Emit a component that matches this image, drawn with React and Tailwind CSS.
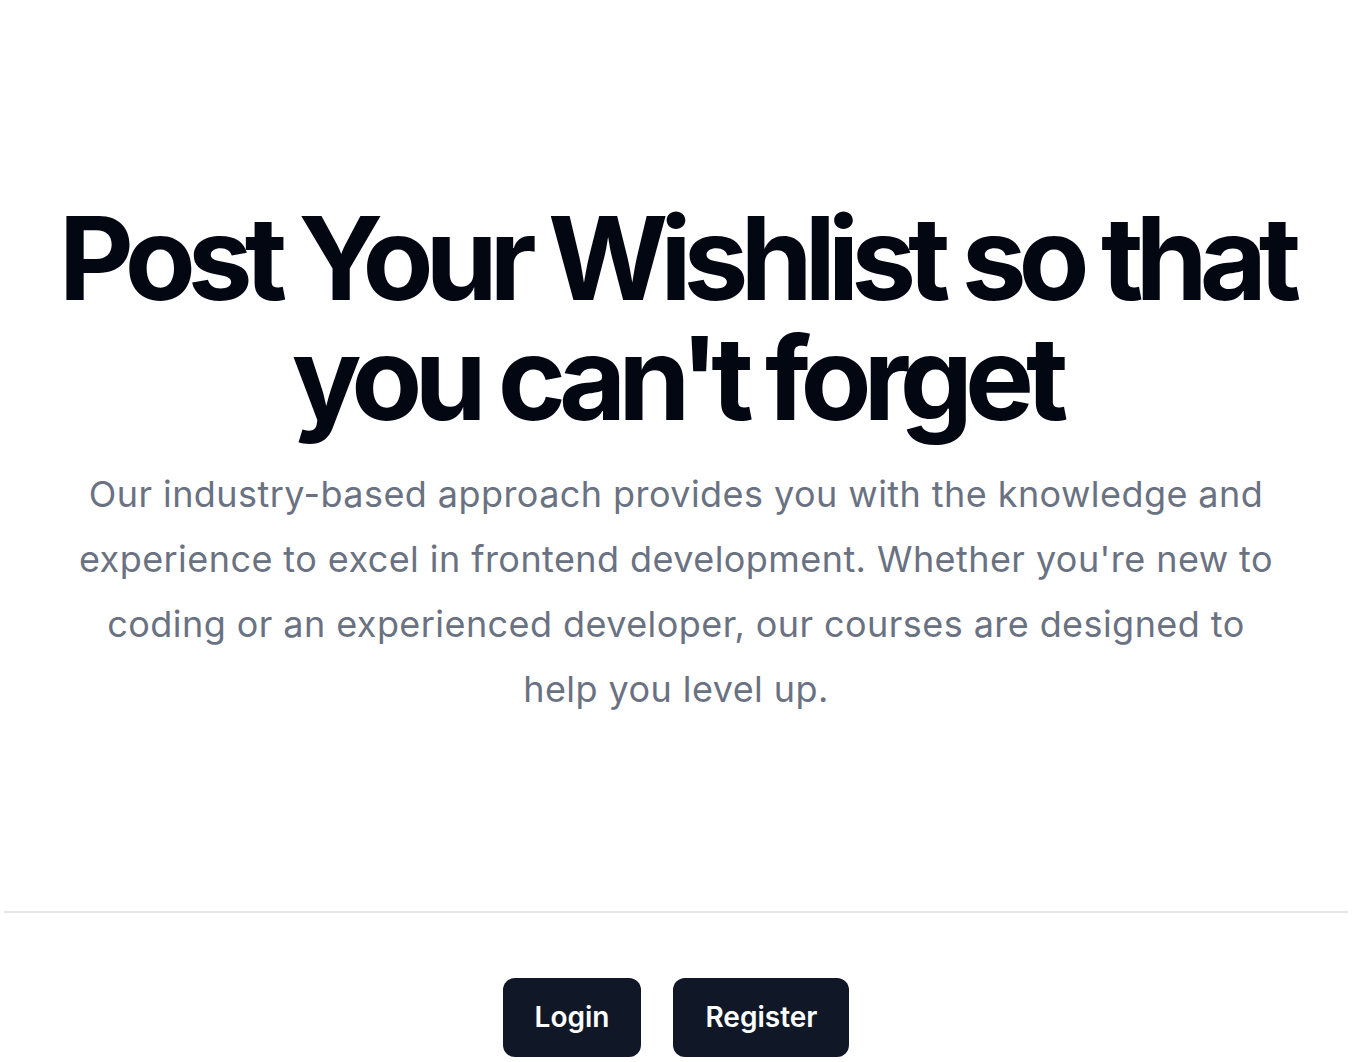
export default function App() {
  return (
    <div
      className="min-h-screen bg-white"
      style={{ fontFamily: "Inter, 'Noto Sans', sans-serif" }}
    >
      <section className="flex flex-col items-center px-4 pt-[198px] text-center">
        <h1 className="text-[116px] font-bold leading-[120px] tracking-[-0.07em] text-[#030712]">
          Post Your Wishlist so that
          <br />
          you can't forget
        </h1>
        <p className="mt-6 max-w-[1210px] text-[36px] leading-[65px] tracking-[0.012em] text-gray-500">
          Our industry-based approach provides you with the knowledge and
          experience to excel in frontend development. Whether you're new to
          coding or an experienced developer, our courses are designed to help
          you level up.
        </p>
      </section>

      <hr className="mx-1 mt-[189px] border-t-2 border-gray-200" />

      <div className="flex justify-center gap-8 pt-[65px]">
        <button className="rounded-xl bg-gray-900 px-[32px] py-[22px] text-[28px] font-semibold leading-[35px] text-white">
          Login
        </button>
        <button className="rounded-xl bg-gray-900 px-[32px] py-[22px] text-[28px] font-semibold leading-[35px] text-white">
          Register
        </button>
      </div>
    </div>
  );
}
